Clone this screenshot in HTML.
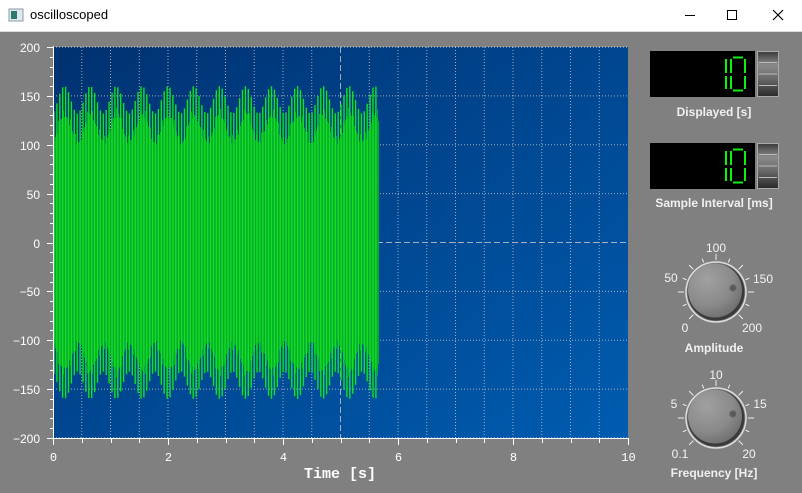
<!DOCTYPE html>
<html><head><meta charset="utf-8"><style>
html,body{margin:0;padding:0;width:802px;height:493px;overflow:hidden;background:#808080;font-family:"Liberation Sans",sans-serif}
#title{position:absolute;left:0;top:0;width:802px;height:31px;background:#fff;border-bottom:1px solid #ddd}
#title .t{position:absolute;left:30px;top:7px;font-size:13px;color:#000;font-family:"Liberation Sans","Noto Sans CJK SC",sans-serif}
.lbl{position:absolute;color:#f0f0f0;font-weight:bold;font-size:12px;text-align:center;width:160px}
</style></head><body>
<div id="title">
<svg width="802" height="31" style="position:absolute;left:0;top:0">
<rect x="9" y="9" width="14" height="12" fill="#dfe8ef" stroke="#8a9aa8"/>
<rect x="11" y="11" width="6" height="8" fill="#2d7a6a"/>
<line x1="685" y1="15.5" x2="695" y2="15.5" stroke="#000"/>
<rect x="727.5" y="10.5" width="9" height="9" fill="none" stroke="#000"/>
<path d="M773 10 L783 20 M783 10 L773 20" stroke="#000" stroke-width="1.2"/>
</svg>
<span class="t">oscilloscoped</span></div>
<svg id="plot" width="802" height="493" style="position:absolute;left:0;top:0">
<defs><linearGradient id="bg" x1="0" y1="0" x2="1" y2="1"><stop offset="0" stop-color="#003170"/><stop offset="1" stop-color="#005cb0"/></linearGradient>
<radialGradient id="kn" cx="0.35" cy="0.3" r="0.8"><stop offset="0" stop-color="#a0a0a0"/><stop offset="0.6" stop-color="#8a8a8a"/><stop offset="1" stop-color="#6a6a6a"/></radialGradient>
<linearGradient id="wh" x1="0" y1="0" x2="0" y2="1"><stop offset="0" stop-color="#3a3a3a"/><stop offset="0.3" stop-color="#8a8a8a"/><stop offset="0.6" stop-color="#6a6a6a"/><stop offset="1" stop-color="#2a2a2a"/></linearGradient>
</defs>
<rect x="53" y="47" width="575" height="391" fill="url(#bg)"/>
<g id="g"></g>
</svg>
<div class="lbl" style="left:634px;top:105px">Displayed [s]</div>
<div class="lbl" style="left:634px;top:196px">Sample Interval [ms]</div>
<div class="lbl" style="left:634px;top:341px">Amplitude</div>
<div class="lbl" style="left:634px;top:466px">Frequency [Hz]</div>
<script>
var g=document.getElementById('g'),s='';
function X(t){return 53+t*57.5}function Y(v){return 242.5-v*0.9775}
for(var i=1;i<20;i++){var x=X(i*0.5);s+='<line x1="'+x+'" y1="47" x2="'+x+'" y2="438" stroke="#c8c8c8" stroke-width="1" stroke-dasharray="'+(i==10?'6,3':'1,2')+'" opacity="0.8"/>';}
for(var v=-150;v<=150;v+=50){var y=Y(v);s+='<line x1="53" y1="'+y+'" x2="628" y2="'+y+'" stroke="#c8c8c8" stroke-dasharray="'+(v==0?'6,3':'1,2')+'" opacity="0.8"/>';}
s+='<line x1="53" y1="47" x2="628" y2="47" stroke="#ddd" stroke-dasharray="1,2"/>';
s+='<line x1="53" y1="438" x2="628" y2="438" stroke="#ddd" stroke-dasharray="1,2"/>';
function A(t){return 146+14*Math.sin(2*Math.PI*t/0.45-1.2);}
var p='';
for(var x=54;x<=378;x+=1){var t=(x-53)/57.5;var a=A(t)-22-10*Math.abs(Math.sin(x*1.3));p+='M'+(x+0.5)+' '+Y(a).toFixed(1)+'V'+Y(-a).toFixed(1);}
s+='<path d="'+p+'" stroke="#06a830" stroke-width="1"/>';
p='';
for(var x=54;x<=378;x+=2.9){var t=(x-53)/57.5;var a=A(t);p+='M'+x.toFixed(1)+' '+Y(a).toFixed(1)+'V'+Y(-a).toFixed(1);}
s+='<path d="'+p+'" stroke="#12e020" stroke-width="1.4"/>';
s+='<line x1="53.5" y1="46" x2="53.5" y2="439" stroke="#fff"/><line x1="52" y1="438.5" x2="628" y2="438.5" stroke="#fff"/>';
for(var v=-200;v<=200;v+=10){var y=Math.round(Y(v))+0.5;var L=v%50==0?6:(v%25==0?4:3);s+='<line x1="'+(53-L)+'" y1="'+y+'" x2="53" y2="'+y+'" stroke="#fff"/>';
if(v%50==0)s+='<text x="40" y="'+(y+4.5)+'" fill="#fff" font-size="12" text-anchor="end" font-family="Liberation Sans">'+(v<0?'\u2212'+(-v):v)+'</text>';}
for(var i=0;i<=20;i++){var x=Math.round(X(i*0.5))+0.5;s+='<line x1="'+x+'" y1="438" x2="'+x+'" y2="'+(i%4==0?445:443)+'" stroke="#fff"/>';
if(i%4==0)s+='<text x="'+x+'" y="461" fill="#fff" font-size="12" text-anchor="middle" font-family="Liberation Mono">'+(i/2)+'</text>';}
s+='<text x="340" y="478" fill="#fff" font-size="15" font-weight="bold" text-anchor="middle" font-family="Liberation Mono">Time [s]</text>';
function lcd(y){var r='<rect x="650" y="'+y+'" width="105" height="46" fill="#000"/>';
r+='<rect x="757.5" y="'+(y+0.5)+'" width="21" height="45" fill="url(#wh)" stroke="#aaa"/>';
for(var j=1;j<4;j++)r+='<line x1="759" y1="'+(y+j*11.5)+'" x2="777" y2="'+(y+j*11.5)+'" stroke="#bbb"/>';
r+='<g stroke="#10f010" stroke-width="2" fill="none"><line x1="726" y1="'+(y+8)+'" x2="726" y2="'+(y+22)+'"/><line x1="726" y1="'+(y+25)+'" x2="726" y2="'+(y+38)+'"/>';
r+='<path d="M731 '+(y+8)+' V'+(y+22)+' M731 '+(y+25)+' V'+(y+38)+' M733 '+(y+6.5)+' H743 M733 '+(y+39.5)+' H743 M745 '+(y+8)+' V'+(y+22)+' M745 '+(y+25)+' V'+(y+38)+'"/></g>';return r;}
s+=lcd(51)+lcd(143);
function knob(cx,cy,labs,pos){var r='';for(var a=-135;a<=135;a+=22.5){var rad=(a-90)*Math.PI/180,r1=32,r2=(a%45==0)?38:36;
r+='<line x1="'+(cx+r1*Math.cos(rad))+'" y1="'+(cy+r1*Math.sin(rad))+'" x2="'+(cx+r2*Math.cos(rad))+'" y2="'+(cy+r2*Math.sin(rad))+'" stroke="#eee"/>';}
r+='<circle cx="'+cx+'" cy="'+cy+'" r="30" fill="none" stroke="#ddd" stroke-width="1.5"/>';
r+='<circle cx="'+cx+'" cy="'+cy+'" r="28.5" fill="#3a3a3a"/><circle cx="'+(cx-1)+'" cy="'+(cy-1.5)+'" r="27" fill="url(#kn)"/>';
r+='<circle cx="'+(cx+17)+'" cy="'+(cy-4)+'" r="3.5" fill="#5a5a5a" stroke="#777"/>';
for(var j=0;j<5;j++)r+='<text x="'+(cx+pos[j][0])+'" y="'+(cy+pos[j][1]+4)+'" fill="#f4f4f4" font-size="12" text-anchor="middle" font-family="Liberation Sans">'+labs[j]+'</text>';return r;}
s+=knob(716,292,['0','50','100','150','200'],[[-31,36],[-45,-14],[0,-44],[47,-13],[36,36]]);
s+=knob(716,418,['0.1','5','10','15','20'],[[-36,36],[-42,-14],[0,-43],[44,-14],[33,36]]);
g.innerHTML=s;
</script>
</body></html>
